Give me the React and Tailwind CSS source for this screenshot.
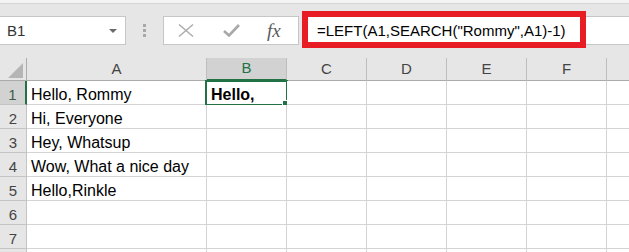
import React from 'react';

// column letters with their widths (px, border included)
const columns = [
  { key: 'A', width: 'w-[180px]' },
  { key: 'B', width: 'w-[80px]' },
  { key: 'C', width: 'w-[80px]' },
  { key: 'D', width: 'w-[80px]' },
  { key: 'E', width: 'w-[80px]' },
  { key: 'F', width: 'w-[80px]' },
  { key: 'G', width: 'w-[80px]', hidden: true },
];

const rows = [
  'Hello, Rommy',
  'Hi, Everyone',
  'Hey, Whatsup',
  'Wow, What a nice day',
  'Hello,Rinkle',
  '',
  '',
  '',
];

const font = { fontFamily: '"Liberation Sans", Arial, sans-serif' };

function FormulaBar() {
  return (
    <div className="relative">
      {/* thin ribbon edge */}
      <div className="h-[3px] bg-[#f3f3f3] border-b border-[#d5d5d5] box-content" />
      <div className="flex h-[54px] bg-[#e6e6e6] pt-[12px]">
        {/* name box */}
        <div className="flex h-[29px] w-[126px] shrink-0 items-center justify-between border border-l-0 border-[#c6c6c6] bg-white pl-[7px] pr-[8px]">
          <span className="pt-[1px] text-[15px] text-[#333]">B1</span>
          <svg width="8" height="4" viewBox="0 0 8 4">
            <path d="M0 0H8L4 4Z" fill="#6b6b6b" />
          </svg>
        </div>

        {/* grip dots */}
        <div className="ml-[17px] flex w-[3px] flex-col gap-[2px] pt-[8px]">
          <span className="h-[3px] w-[3px] bg-[#a8a8a8]" />
          <span className="h-[3px] w-[3px] bg-[#a8a8a8]" />
          <span className="h-[3px] w-[3px] bg-[#a8a8a8]" />
        </div>

        {/* cancel / enter / fx */}
        <div className="ml-[17px] flex h-[29px] w-[136px] shrink-0 items-center border border-[#c6c6c6] bg-white">
          <svg className="ml-[14px]" width="16" height="13" viewBox="0 0 16 13">
            <path d="M1 0.5L15 12.5M15 0.5L1 12.5" stroke="#ababab" strokeWidth="1.4" />
          </svg>
          <svg className="ml-[29px]" width="17" height="13" viewBox="0 0 17 13">
            <path d="M1 7L6 11.5L16 1" stroke="#a8a8a8" strokeWidth="2.6" fill="none" />
          </svg>
          <span
            className="ml-[27px] text-[19px] italic leading-none text-[#5a5a5a]"
            style={{ fontFamily: '"Liberation Serif", "Times New Roman", serif' }}
          >
            fx
          </span>
        </div>

        {/* formula input */}
        <div className="ml-[3px] flex h-[29px] flex-1 items-center border border-r-0 border-[#c6c6c6] bg-white pl-[14px] pt-[1px]">
          <span className="whitespace-nowrap text-[15px] text-black">=LEFT(A1,SEARCH("Rommy",A1)-1)</span>
        </div>
      </div>

      {/* red highlight */}
      <div className="absolute left-[302px] top-[11px] h-[37px] w-[284px] border-[6px] border-[#e81c24]" />
    </div>
  );
}

function HeaderRow() {
  return (
    <div className="flex h-[23px] bg-[#e6e6e6]">
      <div className="relative h-[23px] w-[27px] shrink-0 border-r border-b border-[#ababab]">
        <svg className="absolute left-0 top-0" width="27" height="23" viewBox="0 0 27 23">
          <path d="M8 20H23V5Z" fill="#b5b5b5" />
        </svg>
      </div>
      {columns.map((c) => {
        const active = c.key === 'B';
        return (
          <div
            key={c.key}
            className={
              active
                ? `${c.width} flex h-[23px] shrink-0 items-center justify-center border-r border-b-2 border-r-[#bebebe] border-b-[#217346] bg-[#d2d2d2] text-[15px] text-[#217346]`
                : `${c.width} flex h-[23px] shrink-0 items-center justify-center border-r border-b border-r-[#bebebe] border-b-[#ababab] text-[15px] text-[#444]`
            }
          >
            {!c.hidden && c.key}
          </div>
        );
      })}
    </div>
  );
}

function DataRow({ index, text }) {
  const active = index === 1;
  return (
    <div className="flex h-[24px]">
      <div
        className={
          active
            ? 'flex h-[24px] w-[27px] shrink-0 items-end justify-center border-r-2 border-b border-r-[#217346] border-b-[#c4c4c4] bg-[#d2d2d2] text-[15px] leading-[18px] text-[#3d5c48]'
            : 'flex h-[24px] w-[27px] shrink-0 items-end justify-center border-r border-b border-[#c4c4c4] bg-[#e6e6e6] text-[15px] leading-[18px] text-[#444]'
        }
      >
        {index < 8 && index}
      </div>
      {columns.map((c) => (
        <div
          key={c.key}
          className={`${c.width} relative flex h-[24px] shrink-0 items-end whitespace-nowrap border-r border-b border-[#d4d4d4] bg-white pl-[4px] text-[16px] leading-[18px] text-black`}
        >
          {c.key === 'A' && text}
          {c.key === 'B' && active && (
            <>
              <span className="font-bold">Hello,</span>
              <div className="absolute -left-[2px] -top-[1px] h-[26px] w-[83px] border-2 border-[#217346]">
                <span className="absolute -bottom-[4px] -right-[4px] h-[6px] w-[6px] border border-white bg-[#217346] box-content" />
              </div>
            </>
          )}
        </div>
      ))}
    </div>
  );
}

export default function App() {
  return (
    <div className="h-[252px] w-[629px] overflow-hidden bg-white" style={font}>
      <FormulaBar />
      <HeaderRow />
      {rows.map((text, i) => (
        <DataRow key={i} index={i + 1} text={text} />
      ))}
    </div>
  );
}
